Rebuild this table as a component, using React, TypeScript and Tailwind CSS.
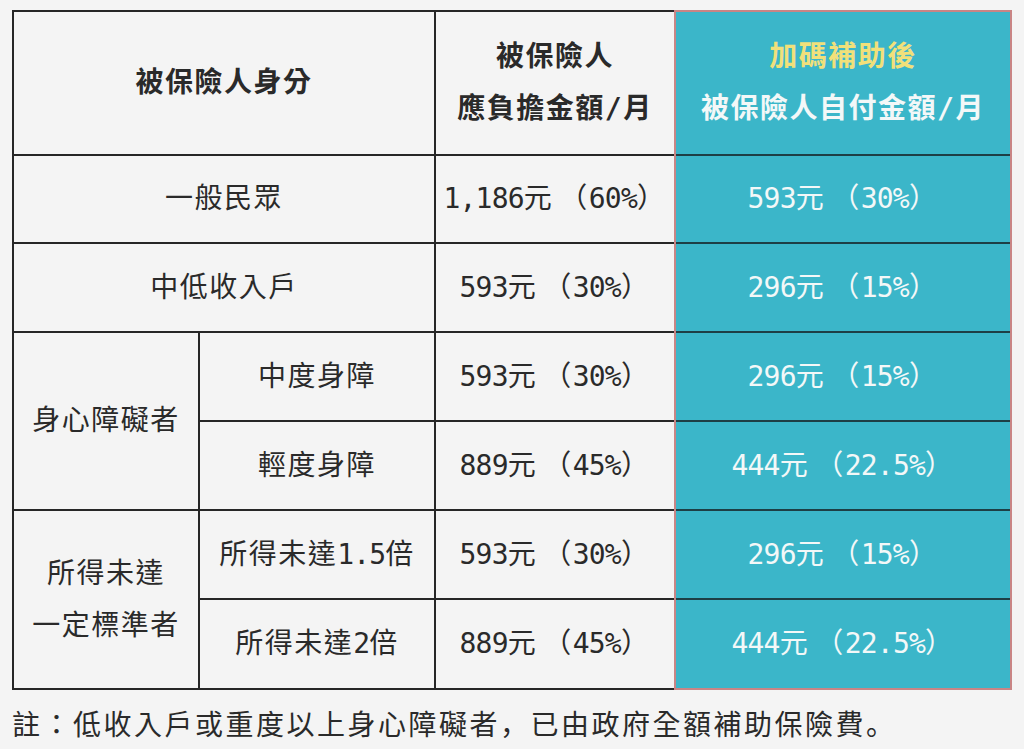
import React from "react";

const font = { fontFamily: '"DejaVu Sans Mono", "Noto Sans CJK TC", monospace' };

function Amt({ v, p }: { v: string; p: string }) {
  return (
    <span className="whitespace-nowrap">
      <span className="tracking-[-0.8px]">{v}</span>
      <span>元</span>
      <span className="ml-[6px]">（</span>
      <span className="tracking-[-0.8px]">{p}</span>
      <span>）</span>
    </span>
  );
}

function Cell({ className = "", children }: { className?: string; children: React.ReactNode }) {
  return (
    <div className={`bg-[#f4f4f4] flex items-center justify-center text-center text-[#2a2a2a] ${className}`}>
      {children}
    </div>
  );
}

function TCell({ children, className = "" }: { children: React.ReactNode; className?: string }) {
  return (
    <div className={`bg-[#3bb6c9] flex items-center justify-center text-center text-[#f3f8f8] ${className}`}>
      {children}
    </div>
  );
}

const sc = { fontFamily: '"Noto Sans CJK JP", sans-serif' };

export default function App() {
  return (
    <div className="w-[1024px] h-[749px] bg-[#f4f4f4] overflow-hidden pt-[10px] pl-[12px]" style={font}>
      <div className="flex text-[28px] tracking-[1.5px]">
        <div className="grid bg-[#262626] p-[2px] pr-0 gap-[2px] grid-cols-[184px_234px_238px] grid-rows-[142px_86px_87px_87px_87px_87px_88px]">
          <Cell className="col-span-2 font-bold">被保險人身分</Cell>
          <Cell className="font-bold flex-col leading-[52px]">
            <span>被保險人</span>
            <span>應負擔金額/月</span>
          </Cell>
          <Cell className="col-span-2">一般民眾</Cell>
          <Cell><Amt v="1,186" p="60%" /></Cell>
          <Cell className="col-span-2">中低收入戶</Cell>
          <Cell><Amt v="593" p="30%" /></Cell>
          <Cell className="row-span-2">身心障礙者</Cell>
          <Cell>中度身障</Cell>
          <Cell><Amt v="593" p="30%" /></Cell>
          <Cell>輕度身障</Cell>
          <Cell><Amt v="889" p="45%" /></Cell>
          <Cell className="row-span-2 flex-col leading-[52px]">
            <span>所得未達</span>
            <span>一定標準者</span>
          </Cell>
          <Cell>
            <span className="whitespace-nowrap">所得未達<span className="tracking-[-0.8px]">1.5</span>倍</span>
          </Cell>
          <Cell><Amt v="593" p="30%" /></Cell>
          <Cell>
            <span className="whitespace-nowrap">所得未達<span className="tracking-[-0.8px]">2</span>倍</span>
          </Cell>
          <Cell><Amt v="889" p="45%" /></Cell>
        </div>
        <div className="w-[338px] border-2 border-[#c98585] bg-[#1d3f45] grid gap-[2px] grid-rows-[142px_86px_87px_87px_87px_87px_88px]">
          <TCell className="font-bold flex-col leading-[52px]">
            <span className="text-[#f1e07a]">加碼補助後</span>
            <span className="whitespace-nowrap">被保險人自付金額/月</span>
          </TCell>
          <TCell><Amt v="593" p="30%" /></TCell>
          <TCell><Amt v="296" p="15%" /></TCell>
          <TCell><Amt v="296" p="15%" /></TCell>
          <TCell><Amt v="444" p="22.5%" /></TCell>
          <TCell><Amt v="296" p="15%" /></TCell>
          <TCell><Amt v="444" p="22.5%" /></TCell>
        </div>
      </div>
      <p className="mt-[15px] text-[28px] tracking-[2.5px] text-[#2a2a2a] leading-[36px] whitespace-nowrap">
        註：低收入戶或重度以上身心障礙者<span style={sc}>，</span>已由政府全額補助保險費<span style={sc}>。</span>
      </p>
    </div>
  );
}
